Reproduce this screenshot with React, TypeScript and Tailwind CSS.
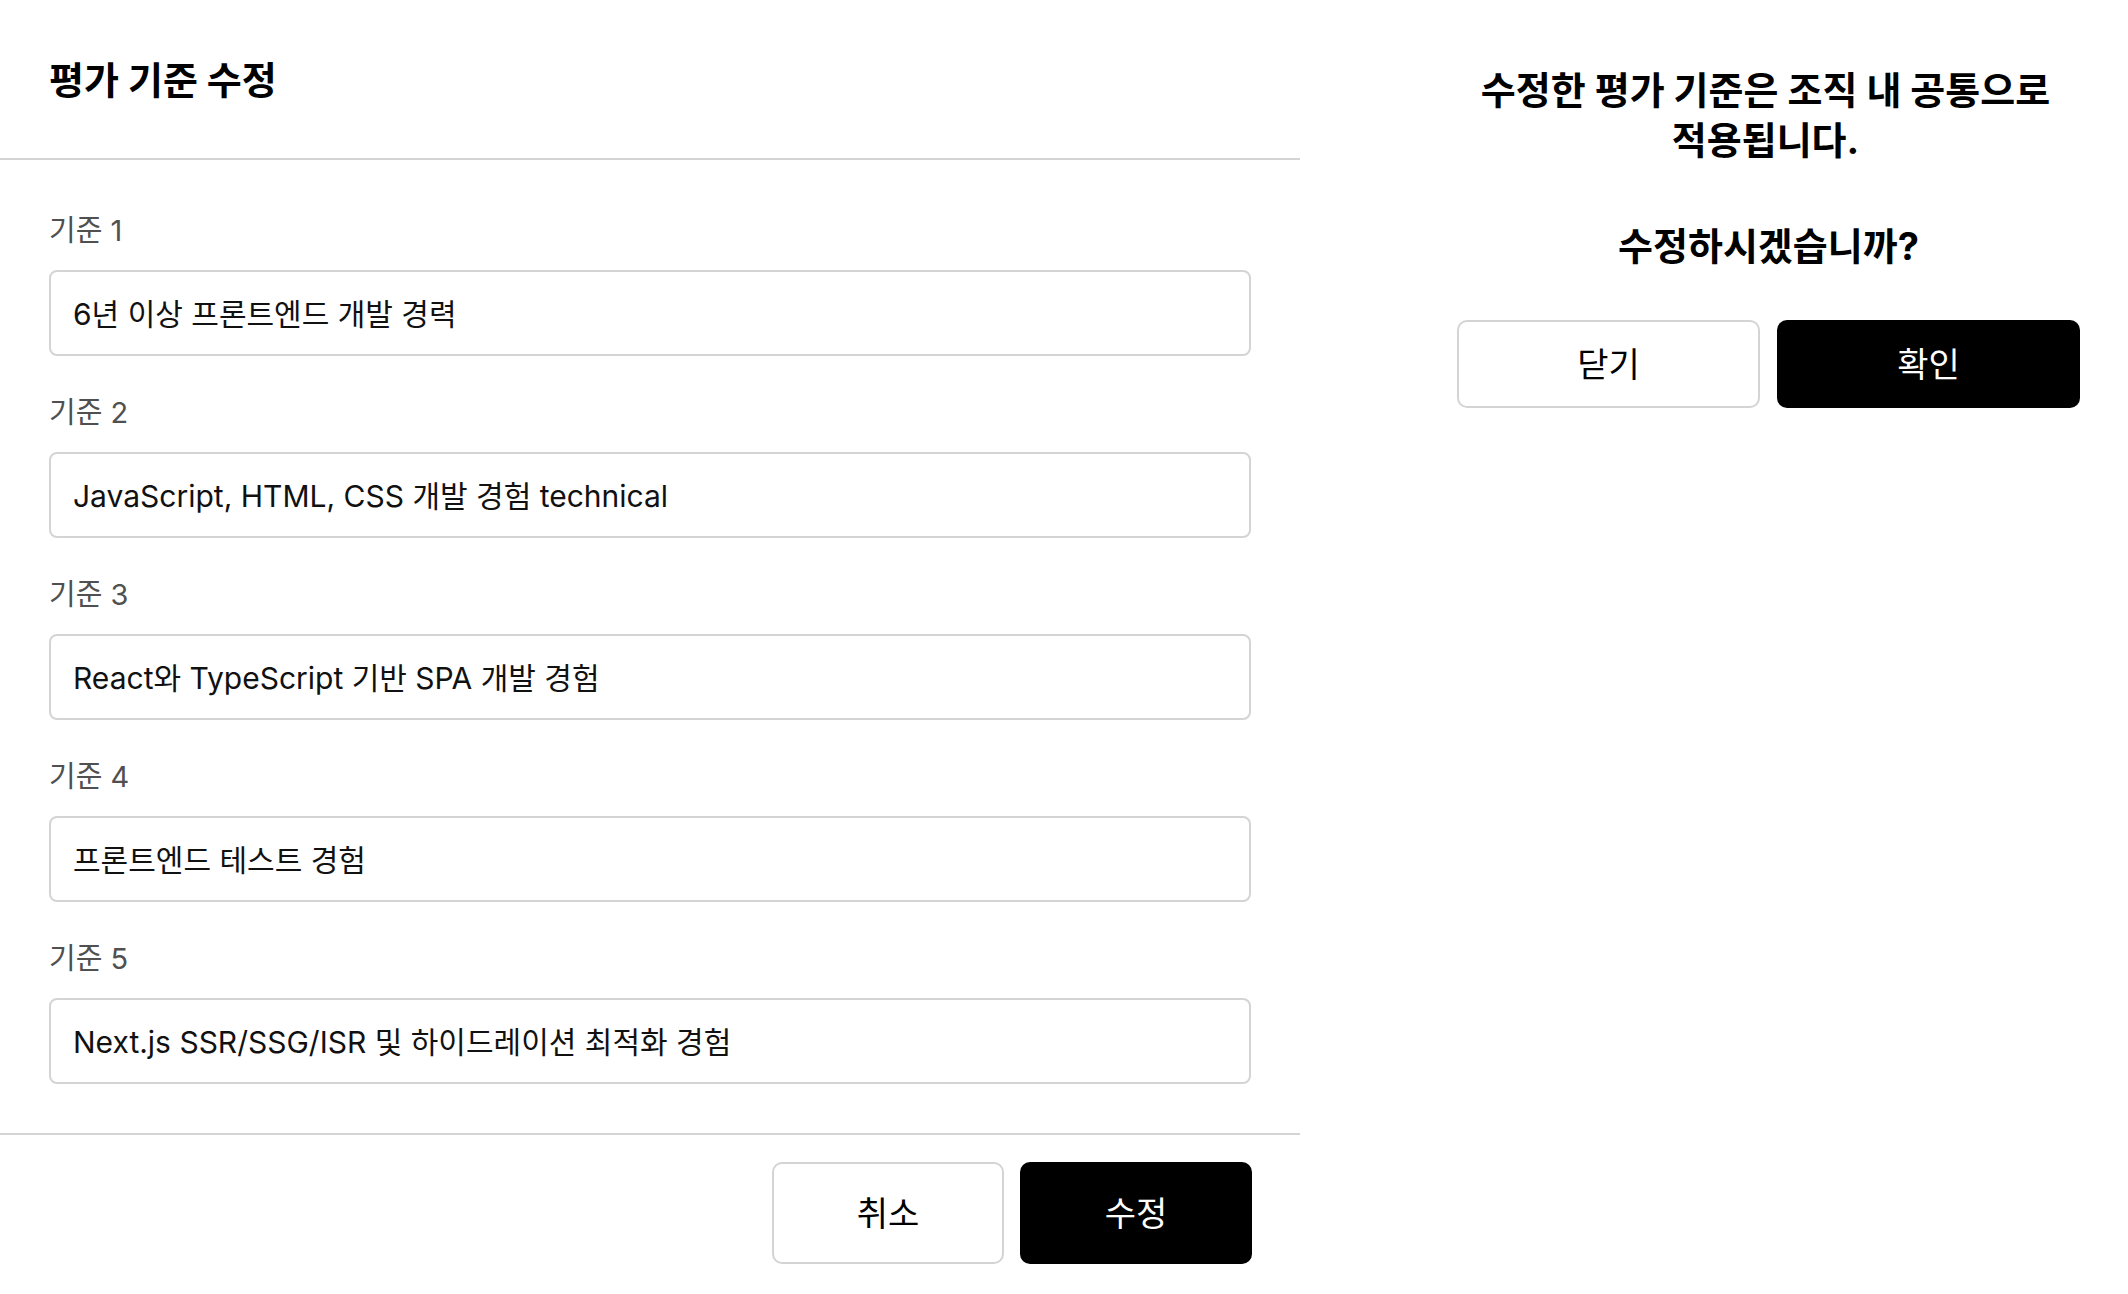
import React from "react";

const criteria = [
  "6년 이상 프론트엔드 개발 경력",
  "JavaScript, HTML, CSS 개발 경험 technical",
  "React와 TypeScript 기반 SPA 개발 경험",
  "프론트엔드 테스트 경험",
  "Next.js SSR/SSG/ISR 및 하이드레이션 최적화 경험",
];

const font = "font-['Inter','Noto_Sans_CJK_KR',sans-serif]";

function CriteriaField({ index, value }: { index: number; value: string }) {
  return (
    <div className="flex flex-col">
      <label className="mb-[19px] text-[29px] leading-[40px] text-[#505050]">
        기준 {index + 1}
      </label>
      <input
        readOnly
        defaultValue={value}
        className="h-[86px] w-full rounded-[8px] border-2 border-[#d4d4d4] bg-white px-[22px] pb-[3px] text-[30px] text-[#111111] outline-none"
      />
    </div>
  );
}

export default function App() {
  return (
    <div className={`flex min-h-[1294px] w-full bg-white text-black ${font}`}>
      <section className="flex w-[1300px] flex-col">
        <header className="flex h-[160px] items-center border-b-2 border-[#d4d4d4] px-[49px] pt-[2px]">
          <h1 className="text-[38px] font-bold leading-none">평가 기준 수정</h1>
        </header>

        <div className="flex flex-col gap-[37px] px-[49px] pb-[49px] pt-[51px]">
          {criteria.map((value, index) => (
            <CriteriaField key={index} index={index} value={value} />
          ))}
        </div>

        <footer className="flex justify-end gap-[16px] border-t-2 border-[#d4d4d4] px-[48px] pb-[28px] pt-[27px]">
          <button className="h-[102px] w-[232px] rounded-[10px] border-2 border-[#d4d4d4] bg-white text-[34px] text-black">
            취소
          </button>
          <button className="h-[102px] w-[232px] rounded-[10px] bg-black text-[34px] text-white">
            수정
          </button>
        </footer>
      </section>

      <aside className="flex flex-1 flex-col pl-[157px] pr-[48px] pt-[65px]">
        <p className="pr-[6px] text-center text-[38px] font-bold leading-[50px]">
          수정한 평가 기준은 조직 내 공통으로
          <br />
          적용됩니다.
        </p>
        <p className="mt-[56px] text-center text-[38px] font-bold leading-[50px]">
          수정하시겠습니까?
        </p>
        <div className="mt-[49px] grid grid-cols-2 gap-[17px]">
          <button className="h-[88px] rounded-[10px] border-2 border-[#d4d4d4] bg-white text-[34px] text-black">
            닫기
          </button>
          <button className="h-[88px] rounded-[10px] bg-black text-[34px] text-white">확인</button>
        </div>
      </aside>
    </div>
  );
}
